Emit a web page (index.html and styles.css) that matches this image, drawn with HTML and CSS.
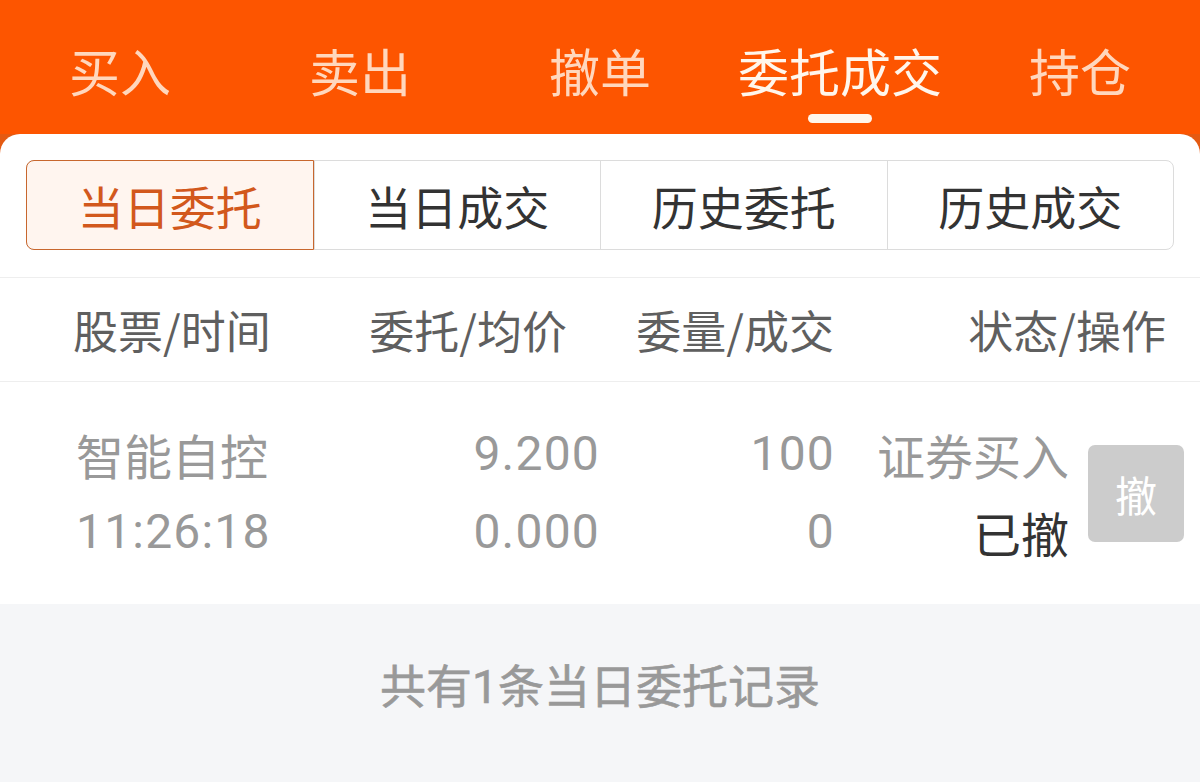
FILE: index.html
```html
<!DOCTYPE html>
<html lang="zh-CN">
<head>
<meta charset="utf-8">
<link rel="stylesheet" href="styles.css">
</head>
<body>
<div class="app">
  <nav class="topbar">
    <div class="tab"><span class="tab-label">买入</span></div>
    <div class="tab"><span class="tab-label">卖出</span></div>
    <div class="tab"><span class="tab-label">撤单</span></div>
    <div class="tab active"><span class="tab-label">委托成交</span><span class="indicator"></span></div>
    <div class="tab"><span class="tab-label">持仓</span></div>
  </nav>
  <div class="card-wrap">
    <main class="card">
      <div class="seg-wrap">
        <div class="seg">
          <div class="seg-item active">当日委托</div>
          <div class="seg-item">当日成交</div>
          <div class="seg-item">历史委托</div>
          <div class="seg-item">历史成交</div>
        </div>
      </div>
      <div class="thead">
        <div class="th c1">股票/时间</div>
        <div class="th c2">委托/均价</div>
        <div class="th c3">委量/成交</div>
        <div class="th c4">状态/操作</div>
      </div>
      <div class="row">
        <div class="td d1"><div>智能自控</div><div class="num">11:26:18</div></div>
        <div class="td d2 num"><div>9.200</div><div>0.000</div></div>
        <div class="td d3 num"><div>100</div><div>0</div></div>
        <div class="td d4"><div>证券买入</div><div class="status">已撤</div></div>
        <button class="cancel-btn">撤</button>
      </div>
      <footer class="summary">共有<span class="one">1</span>条当日委托记录</footer>
    </main>
  </div>
</div>
</body>
</html>
```

FILE: styles.css
```css
* { box-sizing: border-box; }
html, body { margin: 0; padding: 0; }
body {
  width: 1200px;
  height: 782px;
  overflow: hidden;
  background: #f5f6f8;
  font-family: "Roboto", "Noto Sans CJK SC", sans-serif;
}
.app { display: flex; flex-direction: column; height: 782px; }

.topbar {
  height: 134px;
  background: #fd5500;
  display: grid;
  grid-template-columns: repeat(5, 1fr);
}
.tab {
  display: flex;
  flex-direction: column;
  align-items: center;
  padding-top: 39px;
}
.tab-label {
  font-family: "Noto Sans CJK SC", sans-serif;
  font-size: 51px;
  line-height: 62px;
  color: #ffd7bd;
}
.tab.active .tab-label { color: #fff6ec; }
.indicator {
  margin-top: 13px;
  width: 64px;
  height: 9px;
  border-radius: 5px;
  background: #fff6ec;
}

.card-wrap { background: #e45a12; flex: 1; display: flex; }
.card {
  flex: 1;
  background: #fff;
  border-radius: 20px 20px 0 0;
  display: flex;
  flex-direction: column;
}

.seg-wrap { padding: 26px 26px 27px; border-bottom: 1px solid #eeeeee; }
.seg {
  display: grid;
  grid-template-columns: repeat(4, 1fr);
  height: 90px;
  border: 1px solid #dcdcdc;
  border-radius: 8px;
}
.seg-item {
  display: flex;
  align-items: center;
  justify-content: center;
  font-family: "Noto Sans CJK SC", sans-serif;
  font-size: 46px;
  color: #333;
  border-left: 1px solid #dcdcdc;
}
.seg-item:first-child { border-left: none; }
.seg-item.active {
  margin: -1px 0 -1px -1px;
  border: 1px solid #c8672e;
  border-radius: 8px 0 0 8px;
  background: #fff5ef;
  color: #d2581c;
}

.thead {
  height: 104px;
  display: flex;
  align-items: center;
  border-bottom: 1px solid #eeeeee;
  font-family: "Noto Sans CJK SC", sans-serif;
  font-size: 45px;
  color: #5f5f5f;
}
.th.c1 { width: 300px; padding-left: 73px; }
.th.c2 { width: 267px; text-align: right; }
.th.c3 { width: 267px; text-align: right; }
.th.c4 { width: 332px; text-align: right; }

.row {
  height: 222px;
  display: flex;
  align-items: center;
  font-size: 48px;
  line-height: 78px;
  color: #999;
}
.num {
  font-family: "Roboto", "Noto Sans CJK SC", sans-serif;
  font-weight: 400;
  letter-spacing: 1.2px;
}
.d1 { width: 300px; padding-left: 76px; font-family: "Noto Sans CJK SC", sans-serif; }
.d1 .num { font-family: "Roboto", sans-serif; }
.d2 { width: 299px; text-align: right; }
.d3 { width: 235px; text-align: right; }
.d2 div, .d3 div { margin-right: -1px; }
.d4 { width: 235px; text-align: right; font-family: "Noto Sans CJK SC", sans-serif; }
.status { color: #333; }
.cancel-btn {
  margin-left: 19px;
  width: 96px;
  height: 97px;
  border: none;
  border-radius: 7px;
  background: #cccccc;
  color: #fff;
  font-family: "Noto Sans CJK SC", sans-serif;
  font-size: 42px;
  padding: 0;
}

.summary {
  flex: 1;
  background: #f5f6f8;
  text-align: center;
  padding-top: 46px;
  font-family: "Noto Sans CJK SC", sans-serif;
  font-size: 46px;
  font-weight: 400;
  -webkit-text-stroke: 0.6px #999;
  color: #999;
}
.summary .one { font-family: "Roboto", sans-serif; }
```
